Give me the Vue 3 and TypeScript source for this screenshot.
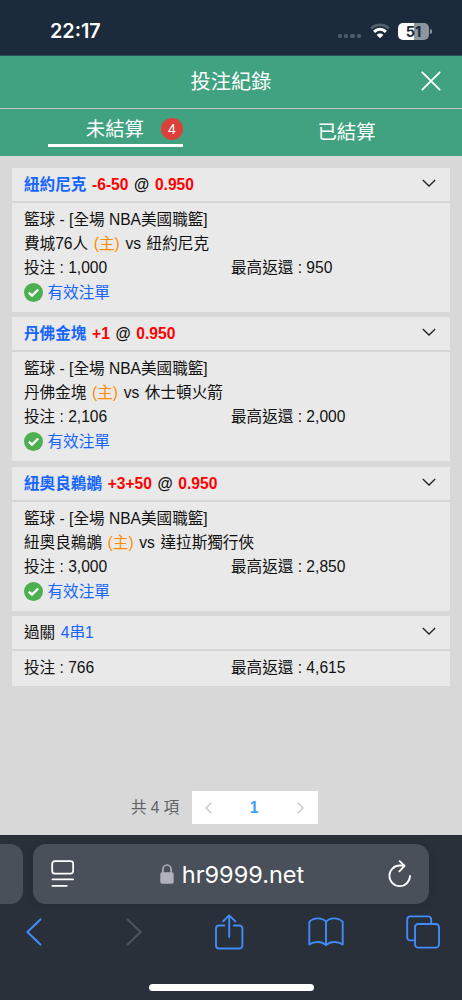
<script setup lang="ts">
interface Bet {
  team: string
  handicap: string
  odds: string
  home: string
  away: string
  stake: string
  payout: string
}

const bets: Bet[] = [
  { team: '紐約尼克', handicap: '-6-50', odds: '0.950', home: '費城76人', away: '紐約尼克', stake: '1,000', payout: '950' },
  { team: '丹佛金塊', handicap: '+1', odds: '0.950', home: '丹佛金塊', away: '休士頓火箭', stake: '2,106', payout: '2,000' },
  { team: '紐奧良鵜鶘', handicap: '+3+50', odds: '0.950', home: '紐奧良鵜鶘', away: '達拉斯獨行俠', stake: '3,000', payout: '2,850' },
]
</script>

<template>
  <div class="phone">
    <div class="status">
      <span class="time">22:17</span>
      <div class="indicators">
        <span class="dots"><i v-for="n in 4" :key="n"></i></span>
        <svg class="wifi" width="20" height="16" viewBox="0 0 20 16">
          <path d="M1.2 5.4C6.2.6 13.8.6 18.8 5.4" fill="none" stroke="#53606c" stroke-width="2.8" />
          <path d="M4.1 8.8C7.5 5.5 12.5 5.5 15.9 8.8" fill="none" stroke="#fff" stroke-width="3" />
          <path d="M6.7 12C8.6 10.1 11.4 10.1 13.3 12L10 15.3Z" fill="#fff" />
        </svg>
        <span class="battery">51</span>
        <span class="nub"></span>
      </div>
    </div>

    <header class="title">
      <span>投注紀錄</span>
      <svg class="close" width="20" height="20" viewBox="0 0 20 20">
        <path d="M1.3 1.3 18.7 18.7M18.7 1.3 1.3 18.7" stroke="#fff" stroke-width="1.8" stroke-linecap="round" />
      </svg>
    </header>

    <nav class="tabs">
      <div class="tab">
        <div class="active"><span>未結算</span><b>4</b></div>
      </div>
      <div class="tab plain"><span>已結算</span></div>
    </nav>

    <main>
      <section v-for="bet in bets" :key="bet.team" class="card">
        <div class="head bold">
          <p><span class="blue">{{ bet.team }}</span> <span class="red">{{ bet.handicap }}</span> @ <span class="red">{{ bet.odds }}</span></p>
          <svg width="14" height="8" viewBox="0 0 14 8"><path d="M.8 1 7 7 13.2 1" fill="none" stroke="#222" stroke-width="1.3" /></svg>
        </div>
        <div class="body">
          <p>籃球 - [全場 NBA美國職籃]</p>
          <p class="teams">{{ bet.home }} <span class="orange">(主)</span> vs {{ bet.away }}</p>
          <div class="money"><p>投注 : {{ bet.stake }}</p><p>最高返還 : {{ bet.payout }}</p></div>
          <div class="valid">
            <svg width="19" height="19" viewBox="0 0 19 19"><circle cx="9.5" cy="9.5" r="9.5" fill="#4caf50" /><path d="M4.8 9.7 8 12.6 14.2 6.5" fill="none" stroke="#fff" stroke-width="2.3" /></svg>
            <span>有效注單</span>
          </div>
        </div>
      </section>
      <section class="card parlay">
        <div class="head">
          <p>過關 <span class="blue">4串1</span></p>
          <svg width="14" height="8" viewBox="0 0 14 8"><path d="M.8 1 7 7 13.2 1" fill="none" stroke="#222" stroke-width="1.3" /></svg>
        </div>
        <div class="body">
          <div class="money"><p>投注 : 766</p><p>最高返還 : 4,615</p></div>
        </div>
      </section>
    </main>

    <div class="pagination">
      <span class="total">共 4 項</span>
      <div class="pager">
        <svg width="7" height="12" viewBox="0 0 7 12"><path d="M6.2.8 1 6 6.2 11.2" fill="none" stroke="#c0c4cc" stroke-width="1.3" /></svg>
        <b>1</b>
        <svg width="7" height="12" viewBox="0 0 7 12"><path d="M.8.8 6 6 .8 11.2" fill="none" stroke="#c0c4cc" stroke-width="1.3" /></svg>
      </div>
    </div>

    <footer>
      <div class="address-row">
        <div class="previous"></div>
        <div class="address">
          <svg class="reader" width="24" height="28" viewBox="0 0 24 28" fill="none" stroke="#fff" stroke-width="1.8" stroke-linecap="round">
            <rect x="2.2" y="1.2" width="21" height="12.4" rx="2.6" /><path d="M2.4 19.4H23.2M2.4 25.8H16.8" />
          </svg>
          <div class="url">
            <svg width="14" height="20" viewBox="0 0 14 20"><rect x=".3" y="8.2" width="13.4" height="11.6" rx="1.8" fill="#aeb0bb" /><path d="M2.9 9V5.5a4.1 4.5 0 0 1 8.2 0V9" fill="none" stroke="#aeb0bb" stroke-width="1.7" /></svg>
            <span>hr9999.net</span>
          </div>
          <svg class="reload" width="24" height="28" viewBox="0 0 24 28" fill="none" stroke="#fff" stroke-width="1.8" stroke-linecap="round" stroke-linejoin="round">
            <path d="M22 15.8A10.3 10.3 0 1 1 11.7 5.5H16.4M11.7 1.2 16.5 5.8 11.4 11.4" />
          </svg>
        </div>
      </div>
      <div class="toolbar">
        <svg width="16" height="28" viewBox="0 0 16 28"><path d="M14.4 1.4 1.4 14 14.4 26.6" fill="none" stroke="#408cfa" stroke-width="2.1" stroke-linecap="round" stroke-linejoin="round" /></svg>
        <svg class="forward" width="16" height="28" viewBox="0 0 16 28"><path d="M1.6 1.4 14.6 14 1.6 26.6" fill="none" stroke="#4b535c" stroke-width="2.1" stroke-linecap="round" stroke-linejoin="round" /></svg>
        <svg class="share" width="30" height="36" viewBox="0 0 30 36" fill="none" stroke="#408cfa" stroke-width="1.9" stroke-linecap="round" stroke-linejoin="round">
          <path d="M10.5 11.5H5A3 3 0 0 0 2 14.5V31.5A3 3 0 0 0 5 34.5H25.4A3 3 0 0 0 28.4 31.5V14.5A3 3 0 0 0 25.4 11.5H19.8M15.2 23V1.5M9.2 7.3 15.2 1.4 21.2 7.3" />
        </svg>
        <svg class="book" width="36" height="30" viewBox="0 0 36 30" fill="none" stroke="#408cfa" stroke-width="1.9" stroke-linejoin="round">
          <path d="M18 5C14.5 .2 5.5 .2 1.3 5V27.5C6 24 14 24 18 28C22 24 30 24 34.7 27.5V5C30.5 .2 21.5 .2 18 5V28" />
        </svg>
        <svg class="pages" width="34" height="34" viewBox="0 0 34 34" fill="none" stroke="#408cfa" stroke-width="1.9">
          <rect x="9" y="9" width="24" height="23.6" rx="3.2" /><path d="M9 25.4H4.4A3 3 0 0 1 1.2 22.4V4.6A3 3 0 0 1 4.4 1.4H22.2A3 3 0 0 1 25.2 4.6V9" />
        </svg>
      </div>
      <div class="home"></div>
    </footer>
  </div>
</template>

<style>
body {
  margin: 0;
}
</style>

<style scoped>
* {
  box-sizing: border-box;
}
svg {
  display: block;
  flex: none;
}
p {
  margin: 0;
  white-space: nowrap;
}
.phone {
  display: flex;
  flex-direction: column;
  width: 462px;
  height: 1000px;
  overflow: hidden;
  background: #d8d8d8;
  color: #111;
  font: 15.6px/24px "Liberation Sans", "Noto Sans CJK TC", sans-serif;
}
.status {
  display: flex;
  justify-content: space-between;
  height: 56px;
  padding: 0 30px 0 50px;
  background: #1c2b3b;
  border-bottom: 1px solid #285355;
  color: #fff;
}
.time {
  margin-top: 19px;
  font: 600 19.8px/24px Inter, sans-serif;
}
.indicators {
  display: flex;
  align-items: center;
  height: 24px;
  margin-top: 19px;
}
.dots {
  display: flex;
  gap: 2px;
  margin: 10px 9px 0 0;
}
.dots i {
  width: 4.3px;
  height: 4.3px;
  border-radius: 1.5px;
  background: #4d5a67;
}
.wifi {
  margin-right: 8px;
}
.battery {
  width: 31px;
  height: 17px;
  border-radius: 5px;
  background: linear-gradient(90deg, #fff 51%, #8d959d 51%);
  color: #1c2b3b;
  text-align: center;
  font: 700 14.5px/17px Inter, sans-serif;
}
.nub {
  width: 2px;
  height: 5px;
  margin-left: 1px;
  border-radius: 0 2px 2px 0;
  background: #8d959d;
}
.title {
  position: relative;
  display: flex;
  justify-content: center;
  height: 53px;
  border-bottom: 1px solid #c7cbc8;
  background: #40a280;
  color: #fff;
  font-size: 20.2px;
  line-height: 53px;
}
.close {
  position: absolute;
  top: 15px;
  right: 21px;
}
.tabs {
  display: grid;
  grid-template-columns: 1fr 1fr;
  height: 47px;
  background: #40a280;
  color: #fff;
  font-size: 19.4px;
}
.tab {
  display: flex;
  justify-content: center;
}
.active {
  display: flex;
  align-items: center;
  justify-content: flex-end;
  gap: 17px;
  width: 135px;
  height: 38px;
  border-bottom: 3.5px solid #fff;
  padding-top: 5px;
}
.active span {
  margin-top: -1px;
}
.active b {
  width: 22px;
  height: 22px;
  border-radius: 50%;
  background: #db403a;
  text-align: center;
  font-size: 14px;
  font-weight: 400;
  line-height: 22px;
}
.plain {
  line-height: 47px;
}
main {
  padding: 12px 12px 0;
}
.card {
  height: 144px;
  margin-bottom: 5.3px;
  background: #e9e9e9;
}
.parlay {
  height: 70px;
}
.head {
  display: flex;
  align-items: center;
  justify-content: space-between;
  height: 35px;
  padding: 1px 14px 0 12px;
  border-bottom: 2px solid #d6d6d6;
  word-spacing: 1.3px;
}
.head svg {
  margin-top: -4px;
}
.bold {
  font-weight: 700;
}
.blue {
  color: #1565ff;
}
.red {
  color: #f00;
}
.orange {
  color: #ff8c00;
}
.body {
  padding: 5px 12px 0;
}
.teams {
  word-spacing: 1.3px;
}
.money {
  display: grid;
  grid-template-columns: 207px 1fr;
}
.valid {
  display: flex;
  align-items: center;
  gap: 5px;
  height: 26px;
  margin-left: -0.5px;
  color: #1565ff;
}
.valid svg {
  margin-top: -1px;
}
.pagination {
  display: flex;
  align-items: center;
  width: 187px;
  height: 33px;
  margin: auto 0 11px 131px;
}
.total {
  width: 60.5px;
  color: #606266;
  word-spacing: -0.2px;
  white-space: nowrap;
}
.pager {
  display: flex;
  align-items: center;
  justify-content: space-between;
  width: 126px;
  height: 33px;
  padding: 0 14px 0 13px;
  background: #fff;
}
.pager b {
  color: #409eff;
}
footer {
  display: flex;
  flex-direction: column;
  height: 165px;
  background: #293039;
}
.address-row {
  display: flex;
  gap: 10px;
  padding-top: 9px;
}
.previous {
  width: 23px;
  height: 60px;
  border-radius: 0 13px 13px 0;
  background: #495059;
}
.address {
  display: flex;
  align-items: center;
  justify-content: space-between;
  width: 396px;
  height: 60px;
  padding: 0 17px;
  border-radius: 13px;
  background: #495059;
  box-shadow: 0 1px 8px rgb(0 0 0 / 12%);
}
.url {
  display: flex;
  align-items: center;
  gap: 8px;
  margin-left: 2px;
  color: #fff;
  font: 23.5px/30px Inter, sans-serif;
}
.url span {
  margin-top: 1px;
}
.toolbar {
  display: flex;
  align-items: center;
  height: 56px;
  padding-left: 26px;
}
.forward {
  margin-left: 84px;
}
.share {
  margin-left: 72px;
}
.book {
  margin-left: 63.5px;
}
.pages {
  margin-left: 62px;
}
.home {
  width: 165px;
  height: 7px;
  margin: 24px auto 0;
  border-radius: 4px;
  background: #fff;
}
</style>
